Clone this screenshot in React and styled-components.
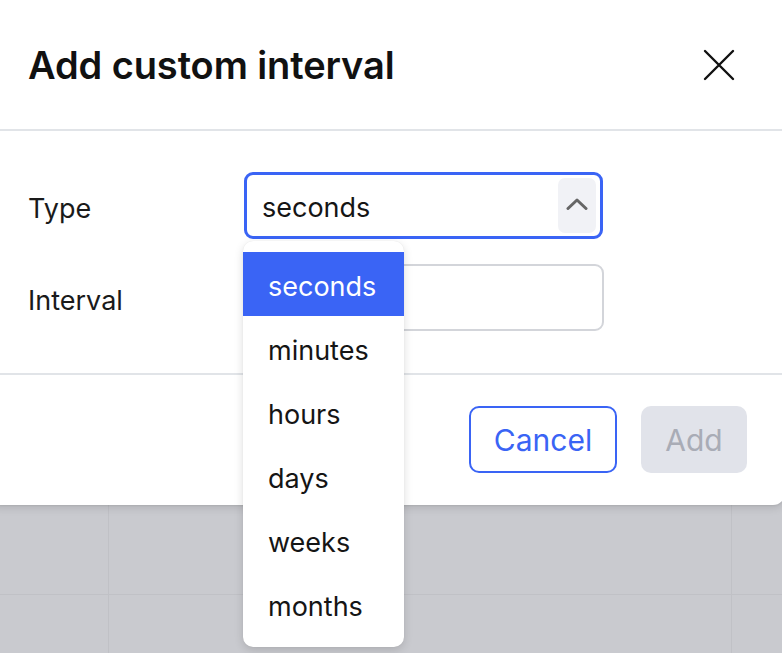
import React, { useState } from "react";
import styled, { createGlobalStyle } from "styled-components";

const OPTIONS = ["seconds", "minutes", "hours", "days", "weeks", "months"];

function App() {
  const [type] = useState("seconds");
  const [open] = useState(true);

  return (
    <>
      <GlobalStyle />
      <Backdrop>
        <Modal>
          <Header>
            <Title>Add custom interval</Title>
            <CloseButton aria-label="Close">
              <svg width="32" height="32" viewBox="0 0 32 32">
                <path
                  d="M2 2 L30 30 M30 2 L2 30"
                  stroke="#111"
                  strokeWidth="2.4"
                  strokeLinecap="round"
                  fill="none"
                />
              </svg>
            </CloseButton>
          </Header>
          <Body>
            <Row>
              <Label>Type</Label>
              <SelectWrap>
                <Select $focused={open}>
                  <SelectValue>{type}</SelectValue>
                  <ChevronBox>
                    <svg width="22" height="12" viewBox="0 0 22 12">
                      <path
                        d="M2 10.5 L11 2 L20 10.5"
                        stroke="#666"
                        strokeWidth="3"
                        strokeLinecap="round"
                        strokeLinejoin="round"
                        fill="none"
                      />
                    </svg>
                  </ChevronBox>
                </Select>
                {open && (
                  <Menu>
                    {OPTIONS.map((opt) => (
                      <Option key={opt} $active={opt === type}>
                        {opt}
                      </Option>
                    ))}
                  </Menu>
                )}
              </SelectWrap>
            </Row>
            <Row>
              <Label>Interval</Label>
              <Input type="text" />
            </Row>
          </Body>
          <Footer>
            <CancelButton>Cancel</CancelButton>
            <AddButton disabled>Add</AddButton>
          </Footer>
        </Modal>
      </Backdrop>
    </>
  );
}

const GlobalStyle = createGlobalStyle`
  html, body {
    margin: 0;
    padding: 0;
    height: 100%;
    overflow: hidden;
  }
  body {
    font-family: Inter, "Noto Sans", "Liberation Sans", sans-serif;
    color: #141414;
  }
  * {
    box-sizing: border-box;
  }
`;

const Backdrop = styled.div`
  width: 782px;
  height: 653px;
  overflow: hidden;
  background-color: #c9cacf;
  background-image: linear-gradient(#c0c1c6, #c0c1c6),
    linear-gradient(#c0c1c6, #c0c1c6), linear-gradient(#c0c1c6, #c0c1c6);
  background-size: 1px 100%, 1px 100%, 100% 1px;
  background-position: 108px 0, 731px 0, 0 594px;
  background-repeat: no-repeat;
`;

const Modal = styled.div`
  width: 797px;
  margin-left: -12px;
  margin-top: -12px;
  padding-top: 12px;
  background: #fff;
  border-radius: 12px;
  box-shadow: 0 3px 8px rgba(0, 0, 0, 0.12), 0 1px 2px rgba(0, 0, 0, 0.06);
`;

const Header = styled.div`
  height: 131px;
  display: flex;
  align-items: center;
  justify-content: space-between;
  padding: 0 50px 0 40px;
  border-bottom: 2px solid #e1e4e8;
`;

const Title = styled.h2`
  margin: 0;
  font-size: 38px;
  font-weight: 600;
  letter-spacing: -0.1px;
  color: #111;
`;

const CloseButton = styled.button`
  border: none;
  background: none;
  padding: 0;
  width: 32px;
  height: 32px;
  display: flex;
  cursor: pointer;
`;

const Body = styled.div`
  padding: 41px 0 42px 40px;
  display: flex;
  flex-direction: column;
  gap: 25px;
  border-bottom: 2px solid #e1e4e8;
`;

const Row = styled.div`
  display: flex;
  align-items: center;
`;

const Label = styled.div`
  width: 216px;
  padding-top: 6px;
  font-size: 27px;
  color: #1a1a1a;
`;

const SelectWrap = styled.div`
  position: relative;
`;

const Select = styled.div`
  width: 359px;
  height: 67px;
  border: 3px solid ${(p) => (p.$focused ? "#3a64f5" : "#d2d4d9")};
  border-radius: 9px;
  display: flex;
  align-items: center;
  justify-content: space-between;
  padding: 0 4px 0 15px;
`;

const SelectValue = styled.span`
  padding-top: 4px;
  font-size: 27px;
  color: #151515;
`;

const ChevronBox = styled.div`
  width: 38px;
  height: 55px;
  border-radius: 7px;
  background: #f1f2f6;
  display: flex;
  align-items: center;
  justify-content: center;
  padding-bottom: 4px;
`;

const Menu = styled.ul`
  position: absolute;
  top: 69px;
  left: -1px;
  width: 161px;
  margin: 0;
  padding: 11px 0;
  list-style: none;
  background: #fff;
  border-radius: 10px;
  box-shadow: 0 3px 10px rgba(0, 0, 0, 0.14), 0 0 1px rgba(0, 0, 0, 0.1);
  z-index: 10;
`;

const Option = styled.li`
  height: 64px;
  display: flex;
  align-items: center;
  padding: 4px 0 0 25px;
  font-size: 27px;
  color: ${(p) => (p.$active ? "#fff" : "#151515")};
  background: ${(p) => (p.$active ? "#3a64f5" : "transparent")};
`;

const Input = styled.input`
  width: 360px;
  height: 67px;
  border: 2px solid #d3d5da;
  border-radius: 9px;
  font-size: 27px;
  padding: 0 16px;
  outline: none;
`;

const Footer = styled.div`
  height: 130px;
  display: flex;
  align-items: center;
  justify-content: flex-end;
  gap: 24px;
  padding: 0 38px 2px 0;
`;

const BaseButton = styled.button`
  height: 67px;
  border-radius: 10px;
  font-family: inherit;
  font-size: 30px;
  padding: 2px 0 0;
`;

const CancelButton = styled(BaseButton)`
  width: 148px;
  border: 2px solid #3a64f5;
  background: #fff;
  color: #3a64f5;
`;

const AddButton = styled(BaseButton)`
  width: 106px;
  border: none;
  background: #e1e3ea;
  color: #a9acb6;
`;

export default App;
